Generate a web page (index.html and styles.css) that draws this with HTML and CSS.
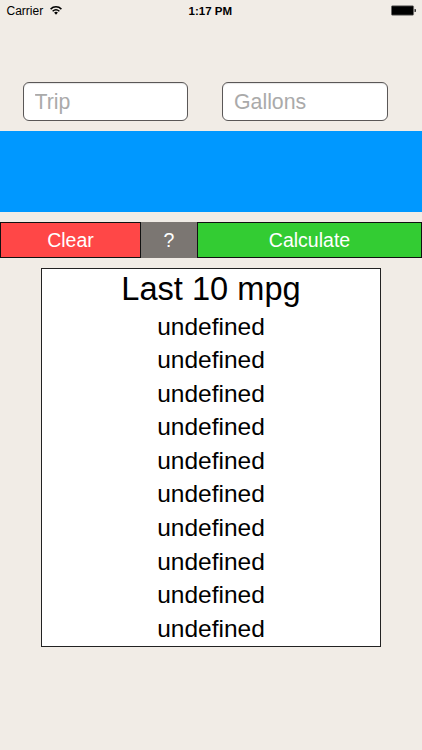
FILE: index.html
```html
<!DOCTYPE html>
<html lang="en">
<head>
<meta charset="utf-8">
<title>MPG</title>
<link rel="stylesheet" href="styles.css">
</head>
<body>
<header class="status">
  <div class="carrier"><span>Carrier</span>
    <svg class="wifi" viewBox="0 0 12 9" width="12" height="9"><g fill="none" stroke="#000" stroke-width="1.5"><path d="M.6 3.1C3.6.1 8.4.1 11.4 3.1"/><path d="M2.6 5.2C4.6 3.4 7.4 3.4 9.4 5.2"/></g><path d="M4.1 6.5Q6 5.1 7.9 6.5L6 8.7Z"/></svg>
  </div>
  <time class="time">1:17 PM</time>
  <svg class="battery" viewBox="0 0 26 12" width="26" height="12"><rect x=".35" y=".85" width="22.3" height="9.3" rx="1" fill="#000" stroke="#7d7b78" stroke-width=".7"/><path d="M23.5 4h.8q.7 0 .7.7v1.6q0 .7-.7.7h-.8z" fill="#333"/></svg>
</header>
<main>
  <form class="fields">
    <input class="field" type="text" placeholder="Trip" aria-label="Trip">
    <input class="field" type="text" placeholder="Gallons" aria-label="Gallons">
  </form>
  <div class="result"></div>
  <div class="buttons">
    <button class="btn clear">Clear</button>
    <button class="btn help">?</button>
    <button class="btn calculate">Calculate</button>
  </div>
  <section class="history">
    <h1 class="title">Last 10 mpg</h1>
    <ul class="list">
      <li>undefined</li>
      <li>undefined</li>
      <li>undefined</li>
      <li>undefined</li>
      <li>undefined</li>
      <li>undefined</li>
      <li>undefined</li>
      <li>undefined</li>
      <li>undefined</li>
      <li>undefined</li>
    </ul>
  </section>
</main>
</body>
</html>
```
FILE: styles.css
```css
* { box-sizing: border-box; }
body {
  margin: 0;
  height: 750px;
  overflow: hidden;
  background: #f1ece6;
  color: #000;
  font-family: "Liberation Sans", Arial, sans-serif;
}
.status {
  display: grid;
  grid-template-columns: 1fr auto 1fr;
  align-items: center;
  height: 22px;
  padding: 0 5px 0 6.5px;
  font-size: 12px;
}
.carrier { display: flex; align-items: center; gap: 7px; }
.wifi { margin-bottom: 1px; }
.time { margin-right: 3px; font-weight: bold; font-size: 11.5px; }
.battery { justify-self: end; }
.fields {
  display: flex;
  gap: 34px;
  padding: 60px 0 9.5px 22.5px;
}
.field {
  width: 165.5px;
  height: 39px;
  padding: 1px 11px 0;
  border: 1px solid #5a5757;
  border-radius: 6px;
  background: #fff;
  box-shadow: inset 0 1px 1px #e6e6e6;
  font: 21.3px "Liberation Sans", Arial, sans-serif;
}
.field::placeholder { color: #aaa; opacity: 1; }
.result { height: 81.5px; background: #0098ff; }
.buttons {
  display: grid;
  grid-template-columns: 141px 56px 225px;
  height: 36px;
  margin-top: 10px;
}
.btn {
  padding: 0;
  border: 1px solid #111;
  border-radius: 0;
  color: #fff;
  font: 19.5px "Liberation Sans", Arial, sans-serif;
}
.clear { background: #ff4747; }
.help { border: 0; background: #7b7672; }
.calculate { background: #33cc33; }
.history {
  width: 340px;
  height: 379px;
  margin: 10px 0 0 41px;
  border: 1px solid #222;
  background: #fff;
  text-align: center;
}
.title { margin: 0 0 1px; font-size: 32.6px; font-weight: normal; line-height: 39.5px; }
.list { margin: 0; padding: 0; list-style: none; font-size: 24.5px; line-height: 33.6px; }
```
